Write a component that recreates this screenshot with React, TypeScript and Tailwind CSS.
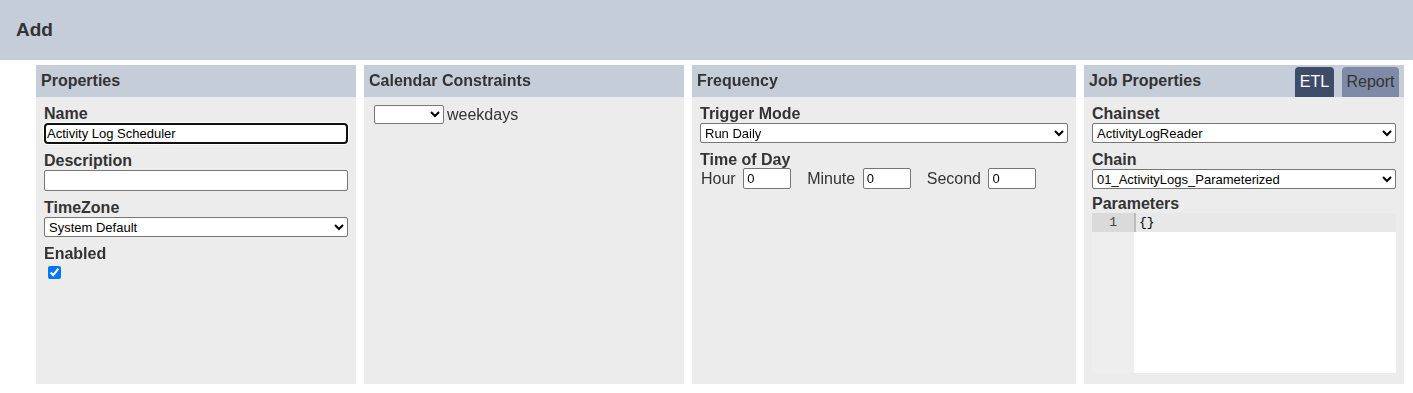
import { ReactNode } from "react";

const Panel = ({
  title,
  width,
  extra,
  children,
}: {
  title: string;
  width: string;
  extra?: ReactNode;
  children: ReactNode;
}) => {
  return (
    <div className={`${width} flex flex-col bg-[#ececec]`}>
      {/* PANEL HEADER */}
      <div className="h-8 bg-[#c5cdd9] flex flex-row items-center justify-between pl-[5px] pr-[5px]">
        <h2 className="text-[16px] font-bold text-[#333]">{title}</h2>
        {extra}
      </div>
      {/* PANEL BODY */}
      <div className="flex-1 p-2">{children}</div>
    </div>
  );
};

const Label = ({ children }: { children: ReactNode }) => (
  <div className="text-[16px] leading-[18px] font-bold text-[#333]">
    {children}
  </div>
);

const Select = ({ value, className }: { value: string; className: string }) => (
  <select
    defaultValue={value}
    className={`block text-[13px] text-black bg-white border border-[#767676] rounded-[2px] ${className}`}
  >
    <option value={value}>{value}</option>
  </select>
);

const App = () => {
  return (
    <div className="w-[1413px] h-[393px] bg-white font-['Liberation_Sans',Arial,sans-serif] text-[#333]">
      {/* TOP BAR */}
      <div className="h-[60px] bg-[#c5cdd9] flex items-center px-4">
        <h1 className="text-[19px] font-bold text-[#333]">Add</h1>
      </div>

      <div className="flex flex-row gap-2 pl-9 pt-[5px] h-[324px]">
        {/* PROPERTIES */}
        <Panel title="Properties" width="w-[320px]">
          <Label>Name</Label>
          <input
            autoFocus
            defaultValue="Activity Log Scheduler"
            className="block w-full h-[21px] text-[13px] text-black bg-white border border-[#767676] rounded-[2px] px-[2px] mb-2"
          />
          <Label>Description</Label>
          <input className="block w-full h-[21px] text-[13px] text-black bg-white border border-[#767676] rounded-[2px] px-[2px] mb-2" />
          <Label>TimeZone</Label>
          <Select value="System Default" className="w-full h-[20px] mb-2" />
          <Label>Enabled</Label>
          <input
            type="checkbox"
            defaultChecked
            className="block w-[13px] h-[13px] ml-1 mt-[3px]"
          />
        </Panel>

        {/* CALENDAR */}
        <Panel title="Calendar Constraints" width="w-[320px]">
          <div className="flex flex-row items-center gap-[3px] ml-[2px]">
            <Select value="" className="w-[70px] h-[19px]" />
            <span className="text-[16px] leading-[18px] text-[#333]">weekdays</span>
          </div>
        </Panel>

        {/* FREQUENCY */}
        <Panel title="Frequency" width="w-[384px]">
          <Label>Trigger Mode</Label>
          <Select value="Run Daily" className="w-full h-[20px] mb-2" />
          <div className="text-[16px] leading-[17px] font-bold text-[#333]">
            Time of Day
          </div>
          <div className="flex flex-row items-center text-[16px] leading-[18px] text-[#333] gap-4 pl-[1px]">
            {["Hour", "Minute", "Second"].map((item) => (
              <div key={item} className="flex flex-row items-center gap-[7.5px]">
                <span>{item}</span>
                <input
                  defaultValue="0"
                  className="block w-12 h-[21px] text-[13px] text-black bg-white border border-[#767676] rounded-[2px] px-[3px]"
                />
              </div>
            ))}
          </div>
        </Panel>

        {/* JOB PROPERTIES */}
        <Panel
          title="Job Properties"
          width="w-[320px]"
          extra={
            <div className="flex flex-row gap-2 self-end h-[30px]">
              <div className="w-[39px] rounded-t-[4px] bg-[#3e4c69] text-white text-[16px] flex items-center justify-center">
                ETL
              </div>
              <div className="w-[57px] rounded-t-[4px] bg-[#7f8ba6] text-[#333] text-[16px] flex items-center justify-center">
                Report
              </div>
            </div>
          }
        >
          <Label>Chainset</Label>
          <Select value="ActivityLogReader" className="w-full h-[20px] mb-2" />
          <Label>Chain</Label>
          <Select value="01_ActivityLogs_Parameterized" className="w-full h-[20px] mb-[6px]" />
          <Label>Parameters</Label>
          {/* EDITOR */}
          <div className="flex flex-row h-40 bg-[#eeeeee] font-['Liberation_Mono',monospace] text-[13px]">
            <div className="w-[42px]">
              <div className="h-[19px] bg-[#dadada] text-[#444] text-right pr-[17px] leading-[19px]">
                1
              </div>
            </div>
            <div className="flex-1 flex flex-col">
              <div className="h-[19px] bg-[#e8e8e8] leading-[19px] pl-[3px] border-l-2 border-[#bbb] text-black">
                {"{}"}
              </div>
              <div className="flex-1 bg-white"></div>
            </div>
          </div>
        </Panel>
      </div>
    </div>
  );
};

export default App;
